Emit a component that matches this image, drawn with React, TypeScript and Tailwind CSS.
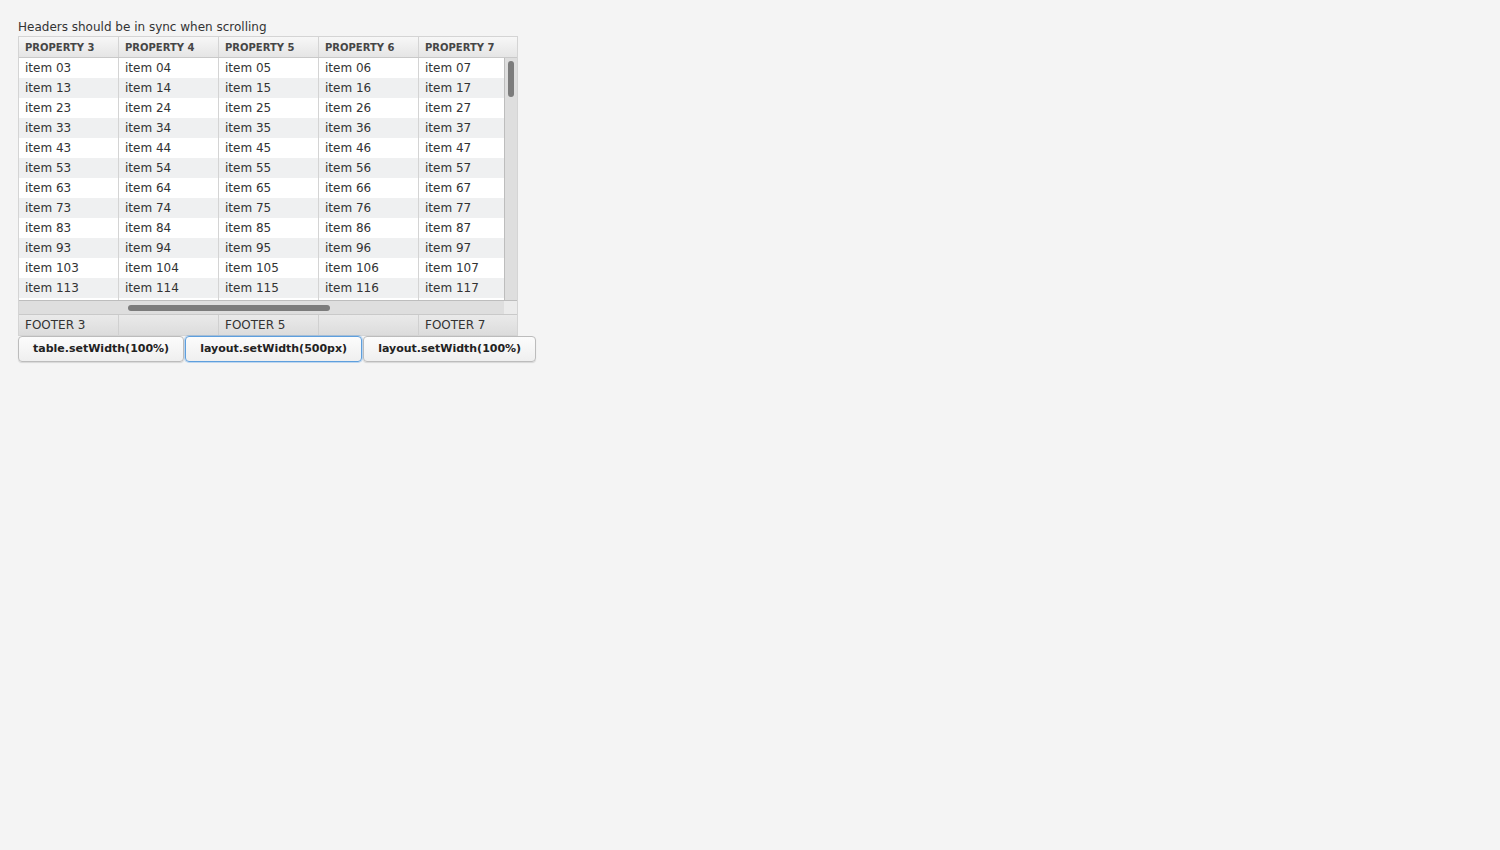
const columns = [3, 4, 5, 6, 7];
const rows = [0, 10, 20, 30, 40, 50, 60, 70, 80, 90, 100, 110];
const footers = ["FOOTER 3", "", "FOOTER 5", "", "FOOTER 7"];

const pad = (n: number) => (n < 10 ? "0" + n : String(n));

const App = () => {
  return (
    <div className="min-h-[850px] bg-[#f4f4f4] pl-[18px] pt-[18px] font-['DejaVu_Sans',sans-serif] text-[#333]">
      <div className="h-[18px] text-[12px] leading-[18px]">Headers should be in sync when scrolling</div>

      <div className="w-[500px] border border-[#d4d4d4] bg-white">
        {/* header */}
        <div className="flex h-[21px] border-b border-[#c9c9c9] bg-gradient-to-b from-[#f7f7f7] to-[#e5e5e5]">
          {columns.map((c, i) => (
            <div
              key={c}
              className={
                i < 4
                  ? "w-[100px] shrink-0 border-r border-[#d4d4d4] pl-[6px] pt-[1px] text-[10px] font-bold leading-[20px] text-[#464646]"
                  : "flex-1 pl-[6px] pt-[1px] text-[10px] font-bold leading-[20px] text-[#464646]"
              }
            >
              PROPERTY {c}
            </div>
          ))}
        </div>

        {/* body + vertical scrollbar */}
        <div className="flex h-[242px]">
          <div className="w-[485px] overflow-hidden">
            {rows.map((r, ri) => (
              <div key={r} className={ri % 2 === 0 ? "flex h-[20px] bg-white" : "flex h-[20px] bg-[#eff0f1]"}>
                {columns.map((c, i) => (
                  <div
                    key={c}
                    className={
                      i < 4
                        ? "w-[100px] shrink-0 border-r border-[#d4d4d4] pl-[6px] text-[12px] leading-[20px]"
                        : "flex-1 pl-[6px] text-[12px] leading-[20px]"
                    }
                  >
                    item {pad(r + c)}
                  </div>
                ))}
              </div>
            ))}
            <div className="flex h-[2px] bg-white">
              {columns.map((c, i) => (
                <div key={c} className={i < 4 ? "w-[100px] shrink-0 border-r border-[#d4d4d4]" : "flex-1"} />
              ))}
            </div>
          </div>
          <div className="relative w-[13px] border-l border-[#bdbdbd] bg-[#dedede]">
            <div className="absolute left-[3px] top-[3px] h-[36px] w-[6px] rounded-full bg-[#7c7c7c]" />
          </div>
        </div>

        {/* horizontal scrollbar */}
        <div className="flex h-[14px] border-t border-[#bdbdbd]">
          <div className="relative w-[485px] bg-[#dedede]">
            <div className="absolute left-[109px] top-[4px] h-[6px] w-[202px] rounded-full bg-[#7c7c7c]" />
          </div>
          <div className="flex-1 bg-[#ebebeb]" />
        </div>

        {/* footer */}
        <div className="flex h-[21px] border-t border-[#c9c9c9] bg-gradient-to-b from-[#eaeaea] to-[#dcdcdc]">
          {footers.map((f, i) => (
            <div
              key={i}
              className={
                i < 4
                  ? "w-[100px] shrink-0 border-r border-[#d0d0d0] pl-[6px] text-[12px] leading-[20px]"
                  : "flex-1 pl-[6px] text-[12px] leading-[20px]"
              }
            >
              {f}
            </div>
          ))}
        </div>
      </div>

      <div className="flex gap-[1px]">
        <button className="h-[26px] rounded-[4px] border border-[#bcbcbc] bg-gradient-to-b from-[#fcfcfc] to-[#efefef] px-[14px] text-[11px] font-bold text-[#222] shadow-[0_1px_1px_rgba(0,0,0,0.12)]">
          table.setWidth(100%)
        </button>
        <button className="h-[26px] rounded-[4px] border border-[#5e9fdd] bg-gradient-to-b from-[#fcfcfc] to-[#efefef] px-[14px] text-[11px] font-bold text-[#222] shadow-[0_0_0_1px_rgba(25,125,225,0.25)]">
          layout.setWidth(500px)
        </button>
        <button className="h-[26px] rounded-[4px] border border-[#bcbcbc] bg-gradient-to-b from-[#fcfcfc] to-[#efefef] px-[14px] text-[11px] font-bold text-[#222] shadow-[0_1px_1px_rgba(0,0,0,0.12)]">
          layout.setWidth(100%)
        </button>
      </div>
    </div>
  );
};

export default App;
